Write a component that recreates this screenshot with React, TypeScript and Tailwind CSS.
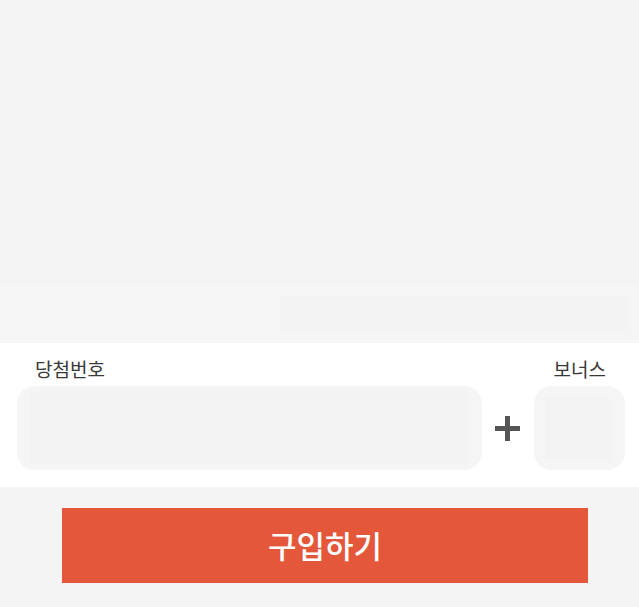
import React from 'react';

export default function App() {
  return (
    <div
      className="w-[639px] h-[607px] bg-[#f4f4f4] flex flex-col"
      style={{ fontFamily: '"Noto Sans CJK KR", "Noto Sans", sans-serif' }}
    >
      {/* result area (empty) */}
      <div className="h-[284px] bg-[#f4f4f4]" />

      <div className="h-[59px] bg-[#f5f5f5] flex justify-end pt-[13px] pr-[12px]">
        <div className="w-[347px] h-[35px] bg-[#f3f3f3]" />
      </div>

      {/* number inputs */}
      <div className="h-[144px] bg-white flex flex-col pl-[17px] pr-[14px] pt-[13px]">
        <div className="flex justify-between items-end h-[30px] text-[19px] leading-[24px] text-[#383838] pb-[5px]">
          <span className="ml-[18px]">당첨번호</span>
          <span className="mr-[19px]">보너스</span>
        </div>
        <div className="flex items-center">
          <div className="w-[465px] h-[84px] rounded-[18px] bg-[#f5f5f5] pl-[13px] pr-[15px] pt-[5px] pb-[7px]">
            <div className="w-full h-full bg-[#f3f3f3]" />
          </div>
          <div className="w-[52px] flex justify-center pr-[2px]">
            <svg width="25" height="25" viewBox="0 0 25 25">
              <rect x="10" y="0" width="5" height="25" fill="#555" />
              <rect x="0" y="10" width="25" height="5" fill="#555" />
            </svg>
          </div>
          <div className="w-[91px] h-[84px] rounded-[18px] bg-[#f5f5f5] pl-[12px] pr-[14px] pt-[12px] pb-[9px]">
            <div className="w-full h-full bg-[#f3f3f3]" />
          </div>
        </div>
      </div>

      {/* buy button */}
      <div className="flex justify-center pt-[21px] pl-[11px]">
        <button className="w-[526px] h-[75px] bg-[#e4573a] text-white text-[31px] font-medium flex items-center justify-center">
          구입하기
        </button>
      </div>
    </div>
  );
}
